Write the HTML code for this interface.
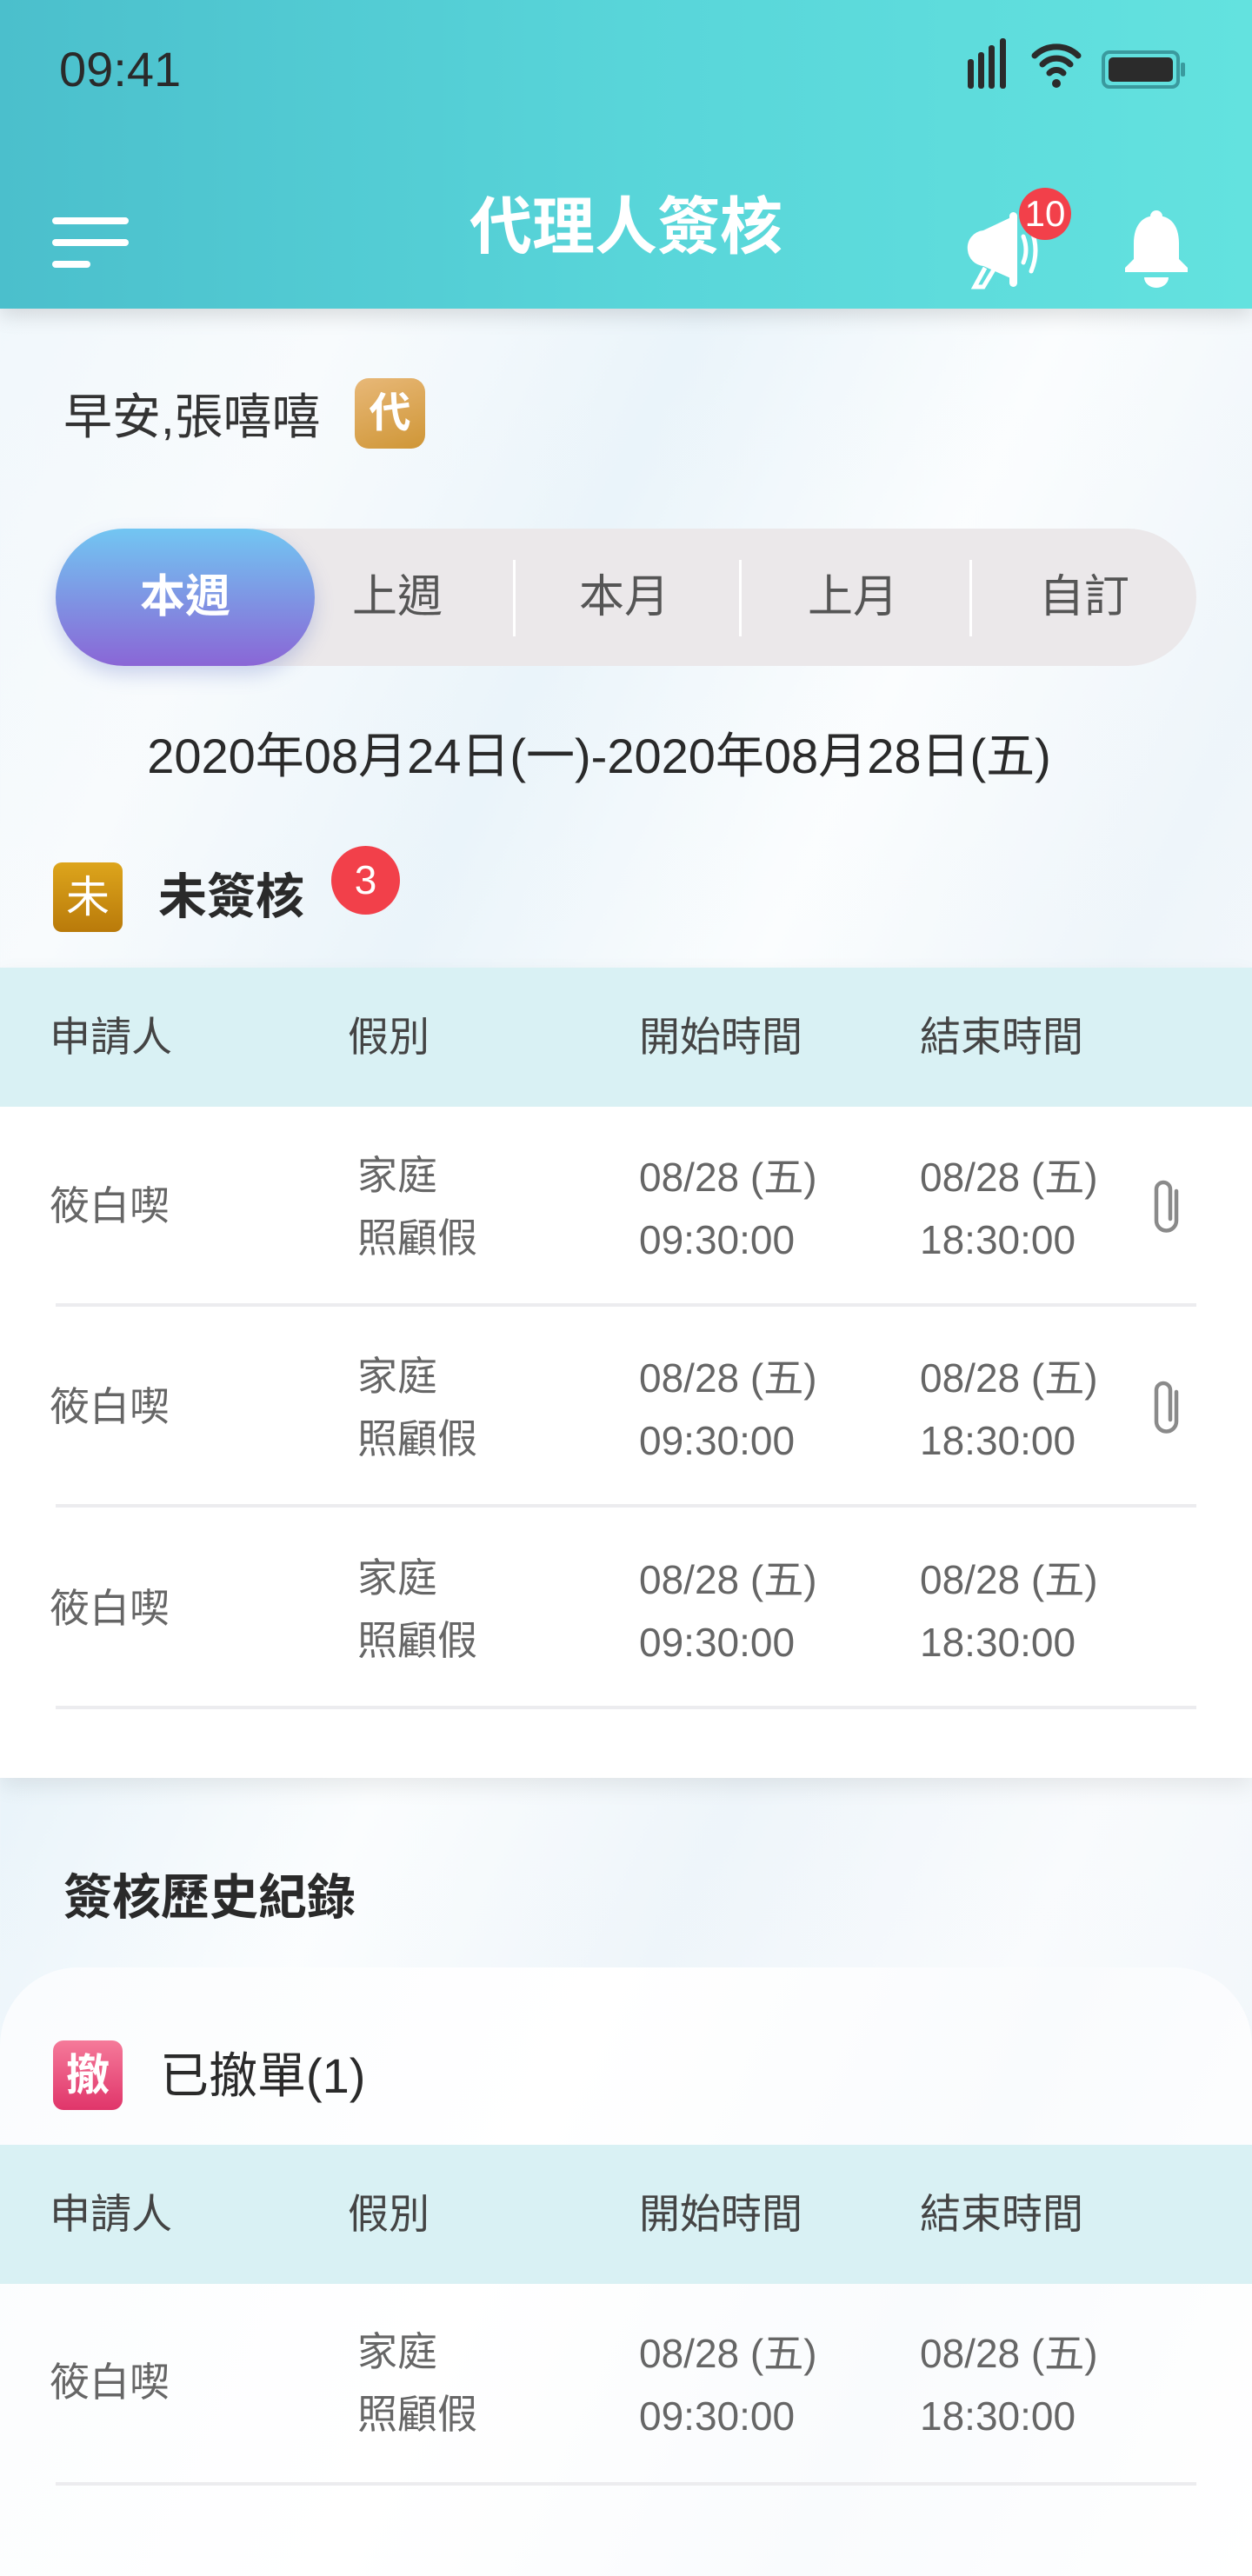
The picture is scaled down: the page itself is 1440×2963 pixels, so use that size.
<!DOCTYPE html>
<html><head><meta charset="utf-8">
<style>
*{margin:0;padding:0;box-sizing:border-box}
body{width:1440px;height:2880px;position:relative;overflow:hidden;font-family:"Liberation Sans","Noto Sans CJK TC",sans-serif;
background:linear-gradient(115deg,#eef6fb 0%,#f8fbfd 20%,#eaf4fa 35%,#fbfdfe 50%,#eef5fa 65%,#f9fbfd 80%,#edf4f9 100%);}
.a{position:absolute;white-space:nowrap}
.hdr{position:absolute;left:0;top:0;width:1440px;height:355px;background:linear-gradient(90deg,#4bbfcc,#58d5d9 50%,#63e2df);box-shadow:0 8px 22px rgba(0,0,0,.13);z-index:2}
.t{line-height:1}
.card{position:absolute;left:0;background:#fff}
.th{position:absolute;left:0;width:1440px;height:160px;background:#d9f1f4}
.th span{position:absolute;top:56px;font-size:47px;color:#444;line-height:1}
.cell{position:absolute;font-size:46px;color:#666;line-height:1}
.sep{position:absolute;left:64px;width:1312px;height:4px;background:#ececef}
</style></head><body>
<div class="hdr">
  <div class="a t" style="left:68px;top:52px;font-size:56px;color:#2a2a2a;font-family:'Liberation Sans',sans-serif">09:41</div>
  <!-- signal -->
  <div class="a" style="left:1113px;top:68px;width:7px;height:34px;background:#2b2b2b;border-radius:3px"></div>
  <div class="a" style="left:1125px;top:60px;width:7px;height:42px;background:#2b2b2b;border-radius:3px"></div>
  <div class="a" style="left:1137px;top:52px;width:7px;height:50px;background:#2b2b2b;border-radius:3px"></div>
  <div class="a" style="left:1150px;top:44px;width:7px;height:58px;background:#2b2b2b;border-radius:3px"></div>
  <svg class="a" style="left:1185px;top:44px" width="60" height="60" viewBox="0 0 60 60"><g fill="none" stroke="#2b2b2b" stroke-width="7" stroke-linecap="round"><path d="M5 20a36 36 0 0 1 50 0"/><path d="M14 30a22 22 0 0 1 32 0"/><path d="M22 40a11 11 0 0 1 16 0"/></g><circle cx="30" cy="52" r="5" fill="#2b2b2b"/></svg>
  <div class="a" style="left:1267px;top:58px;width:90px;height:44px;border:4px solid #3a9a9e;border-radius:9px;padding:4px"><div style="width:100%;height:100%;background:#2b2b2b;border-radius:5px"></div></div>
  <div class="a" style="left:1358px;top:72px;width:5px;height:16px;background:#3a9a9e;border-radius:2px"></div>
  <!-- hamburger -->
  <div class="a" style="left:60px;top:250px;width:88px;height:8px;background:#fff;border-radius:4px"></div>
  <div class="a" style="left:60px;top:275px;width:88px;height:8px;background:#fff;border-radius:4px"></div>
  <div class="a" style="left:60px;top:300px;width:44px;height:8px;background:#fff;border-radius:4px"></div>
  <div class="a t" style="left:0;width:1440px;text-align:center;top:226px;font-size:72px;font-weight:bold;color:#fff">代理人簽核</div>
  <!-- megaphone -->
  <svg class="a" style="left:1105px;top:240px" width="100" height="95" viewBox="0 0 100 95">
    <path d="M8 48 a20 20 0 0 1 18 -23 L62 8 V82 L26 66 A20 20 0 0 1 8 48Z" fill="#fff"/>
    <path d="M28 68 L16 90 H26 L38 70" fill="none" stroke="#fff" stroke-width="5"/>
    <rect x="56" y="4" width="9" height="86" rx="4.5" fill="#fff"/>
    <path d="M72 32 q6 16 0 30" fill="none" stroke="#fff" stroke-width="5" stroke-linecap="round"/>
    <path d="M81 24 q10 24 0 48" fill="none" stroke="#fff" stroke-width="5" stroke-linecap="round"/>
  </svg>
  <div class="a t" style="left:1172px;top:216px;width:60px;height:60px;border-radius:50%;background:#f2404a;color:#fff;font-size:42px;text-align:center;line-height:60px">10</div>
  <!-- bell -->
  <svg class="a" style="left:1290px;top:240px" width="80" height="95" viewBox="0 0 80 95">
    <circle cx="40" cy="9" r="7" fill="#fff"/>
    <path d="M40 8 C20 8 14 24 14 40 V58 L4 68 V73 H76 V68 L66 58 V40 C66 24 60 8 40 8Z" fill="#fff"/>
    <path d="M26 79 H54 A14 12 0 0 1 26 79Z" fill="#fff"/>
  </svg>
</div>

<div class="a t" style="left:73px;top:452px;font-size:56px;color:#333">早安,張嘻嘻</div>
<div class="a t" style="left:408px;top:435px;width:81px;height:81px;border-radius:16px;background:linear-gradient(160deg,#e8b878,#cf9636);color:#fff;font-size:48px;font-weight:bold;text-align:center;line-height:81px">代</div>

<!-- segmented -->
<div class="a" style="left:64px;top:608px;width:1312px;height:158px;border-radius:79px;background:#ebe8ea"></div>
<div class="a" style="left:590px;top:644px;width:3px;height:88px;background:#fff"></div>
<div class="a" style="left:850px;top:644px;width:3px;height:88px;background:#fff"></div>
<div class="a" style="left:1115px;top:644px;width:3px;height:88px;background:#fff"></div>
<div class="a t" style="left:64px;top:608px;width:298px;height:158px;border-radius:79px;background:linear-gradient(180deg,#72c6f2,#8a66d6);box-shadow:0 10px 22px rgba(100,120,200,.3);color:#fff;font-size:52px;line-height:158px;text-align:center;font-weight:bold">本週</div>
<div class="a t" style="left:357px;width:200px;top:661px;font-size:52px;color:#555;text-align:center">上週</div>
<div class="a t" style="left:618px;width:200px;top:661px;font-size:52px;color:#555;text-align:center">本月</div>
<div class="a t" style="left:881px;width:200px;top:661px;font-size:52px;color:#555;text-align:center">上月</div>
<div class="a t" style="left:1147px;width:200px;top:661px;font-size:52px;color:#555;text-align:center">自訂</div>

<div class="a t" style="left:0;width:1378px;text-align:center;top:842px;font-size:56px;color:#2a2a2a">2020年08月24日(一)-2020年08月28日(五)</div>

<div class="a t" style="left:61px;top:992px;width:80px;height:80px;border-radius:10px;background:linear-gradient(180deg,#dda51c,#b97a0a);color:#fff;font-size:50px;line-height:80px;text-align:center">未</div>
<div class="a t" style="left:182px;top:1004px;font-size:56px;font-weight:bold;color:#2a2a2a">未簽核</div>
<div class="a t" style="left:381px;top:973px;width:79px;height:79px;border-radius:50%;background:#f2404a;color:#fff;font-size:46px;line-height:79px;text-align:center">3</div>

<!-- card 1 -->
<div class="card" style="top:1113px;height:932px;width:1440px;box-shadow:0 10px 24px rgba(0,0,0,.08)"></div>
<div class="th" style="top:1113px"><span style="left:57px">申請人</span><span style="left:400px">假別</span><span style="left:735px">開始時間</span><span style="left:1058px">結束時間</span></div>

<div class="cell" style="left:57px;top:1364px">筱白喫</div>
<div class="cell" style="left:411px;top:1329px">家庭</div><div class="cell" style="left:411px;top:1401px">照顧假</div>
<div class="cell" style="left:735px;top:1331px">08/28 (五)</div><div class="cell" style="left:735px;top:1403px">09:30:00</div>
<div class="cell" style="left:1058px;top:1331px">08/28 (五)</div><div class="cell" style="left:1058px;top:1403px">18:30:00</div>
<svg class="a" style="left:1322px;top:1354px" width="40" height="70" viewBox="0 0 40 70"><path d="M31 16 V50 a11.5 11.5 0 0 1 -23 0 V14 a8 8 0 0 1 16 0 V48" fill="none" stroke="#8a8a8a" stroke-width="4.5" stroke-linecap="round"/></svg>
<div class="sep" style="top:1499px"></div>

<div class="cell" style="left:57px;top:1595px">筱白喫</div>
<div class="cell" style="left:411px;top:1560px">家庭</div><div class="cell" style="left:411px;top:1632px">照顧假</div>
<div class="cell" style="left:735px;top:1562px">08/28 (五)</div><div class="cell" style="left:735px;top:1634px">09:30:00</div>
<div class="cell" style="left:1058px;top:1562px">08/28 (五)</div><div class="cell" style="left:1058px;top:1634px">18:30:00</div>
<svg class="a" style="left:1322px;top:1585px" width="40" height="70" viewBox="0 0 40 70"><path d="M31 16 V50 a11.5 11.5 0 0 1 -23 0 V14 a8 8 0 0 1 16 0 V48" fill="none" stroke="#8a8a8a" stroke-width="4.5" stroke-linecap="round"/></svg>
<div class="sep" style="top:1730px"></div>

<div class="cell" style="left:57px;top:1827px">筱白喫</div>
<div class="cell" style="left:411px;top:1792px">家庭</div><div class="cell" style="left:411px;top:1864px">照顧假</div>
<div class="cell" style="left:735px;top:1794px">08/28 (五)</div><div class="cell" style="left:735px;top:1866px">09:30:00</div>
<div class="cell" style="left:1058px;top:1794px">08/28 (五)</div><div class="cell" style="left:1058px;top:1866px">18:30:00</div>
<div class="sep" style="top:1962px"></div>

<div class="a t" style="left:73px;top:2155px;font-size:56px;font-weight:bold;color:#2a2a2a">簽核歷史紀錄</div>

<!-- card 2 -->
<div class="card" style="top:2263px;height:700px;width:1440px;border-radius:90px 90px 0 0;background:linear-gradient(115deg,#fafcfe,#fff 40%,#f9fbfd 70%,#fff)"></div>
<div class="a t" style="left:61px;top:2347px;width:80px;height:80px;border-radius:12px;background:linear-gradient(180deg,#f57a9a,#e0356a);color:#fff;font-size:50px;font-weight:bold;line-height:80px;text-align:center">撤</div>
<div class="a t" style="left:184px;top:2360px;font-size:56px;color:#2a2a2a">已撤單(1)</div>
<div class="th" style="top:2467px"><span style="left:57px">申請人</span><span style="left:400px">假別</span><span style="left:735px">開始時間</span><span style="left:1058px">結束時間</span></div>
<div class="cell" style="left:57px;top:2717px">筱白喫</div>
<div class="cell" style="left:411px;top:2682px">家庭</div><div class="cell" style="left:411px;top:2754px">照顧假</div>
<div class="cell" style="left:735px;top:2684px">08/28 (五)</div><div class="cell" style="left:735px;top:2756px">09:30:00</div>
<div class="cell" style="left:1058px;top:2684px">08/28 (五)</div><div class="cell" style="left:1058px;top:2756px">18:30:00</div>
<div class="sep" style="top:2855px"></div>
</body></html>
